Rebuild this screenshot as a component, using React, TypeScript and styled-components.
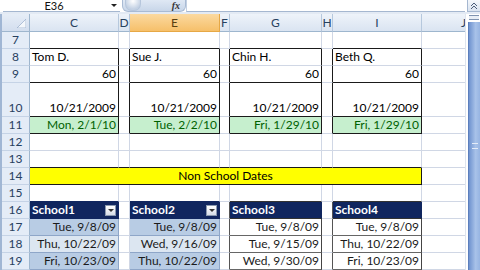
import React from 'react';
import styled, { createGlobalStyle } from 'styled-components';

const GlobalStyle = createGlobalStyle`
  html, body {
    margin: 0;
    padding: 0;
    overflow: hidden;
    background: #fff;
  }
  body {
    font-family: Lato, "Liberation Sans", sans-serif;
  }
`;

const GRID = '#d0d7e5';
const EDGE = '#1a1a1a';

const Screen = styled.div`
  width: 480px;
  height: 270px;
  display: flex;
  flex-direction: column;
  overflow: hidden;
  background: #fff;
`;

const FormulaBar = styled.div`
  height: 14px;
  display: flex;
  box-sizing: border-box;
  border-bottom: 2px solid #e3eaf4;
  background: #fff;
`;

const NameBox = styled.div`
  width: 117px;
  margin-left: 3px;
  display: flex;
  align-items: center;
  box-sizing: border-box;
  border-bottom: 1px solid #a5b7d0;
  font-size: 11px;
  line-height: 11px;
  color: #111;
`;

const NameText = styled.span`
  flex: 1;
  text-align: center;
  padding-right: 6px;
`;

const DropArrow = styled.span`
  width: 0;
  height: 0;
  margin: 0 3px 0 0;
  border-left: 3px solid transparent;
  border-right: 3px solid transparent;
  border-top: 3px solid #222;
`;

const FxGroup = styled.div`
  width: 64px;
  margin-left: 2px;
  display: flex;
  align-items: center;
  justify-content: space-between;
  box-sizing: border-box;
  border-radius: 0 0 6px 6px;
  background: linear-gradient(#dfe8f4, #c8d6e9);
  border: 1px solid #a9bbd4;
  border-top: none;
`;

const Grip = styled.span`
  width: 14px;
  height: 10px;
  margin-left: 2px;
  border-radius: 0 0 7px 7px;
  background: radial-gradient(circle at 50% 10%, #ffffff, #c3d1e4 70%);
  border: 1px solid #b6c6dc;
  border-top: none;
`;

const FxLabel = styled.span`
  font-family: "Liberation Serif", serif;
  font-style: italic;
  font-weight: bold;
  font-size: 10px;
  line-height: 10px;
  color: #333;
  margin-right: 5px;
`;

const FormulaInput = styled.div`
  flex: 1;
  box-sizing: border-box;
  border-bottom: 1px solid #a5b7d0;
  border-left: 1px solid #c3d0e2;
`;

const RibbonToggle = styled.div`
  width: 12px;
  margin-left: 2px;
  display: flex;
  align-items: center;
  justify-content: center;
  background: linear-gradient(#f4f7fb, #d9e3f0);
  border-left: 1px solid #a5b7d0;
  border-bottom: 1px solid #a5b7d0;
`;

const Body = styled.div`
  flex: 1;
  display: flex;
  border-left: 2px solid #a0b6d4;
  min-height: 0;
`;

const Sheet = styled.div`
  flex: 1;
  min-width: 0;
  overflow: hidden;
  display: grid;
  grid-template-columns: 28px 89px 11px 90px 10px 92px 11px 89px 84px;
  grid-template-rows: 18px 17px 17px 17px 34px repeat(9, 17px);
  font-size: 12px;
  line-height: 14px;
  color: #000;
  border-right: 1px solid #dfe5ee;
`;

const Corner = styled.div`
  box-sizing: border-box;
  background: linear-gradient(#e6edf7, #d3deee);
  border-right: 1px solid #9eb6ce;
  border-bottom: 1px solid #9eb6ce;
  display: flex;
  align-items: flex-end;
  justify-content: flex-end;
  padding: 0 3px 3px 0;
`;

const ColHead = styled.div<{ $selected?: boolean }>`
  box-sizing: border-box;
  display: flex;
  align-items: center;
  justify-content: center;
  overflow: hidden;
  color: ${p => (p.$selected ? '#5a3e10' : '#27415f')};
  background: ${p =>
    p.$selected
      ? 'linear-gradient(#fbd9a0, #f6c06a)'
      : 'linear-gradient(#eef3fa, #dae4f1)'};
  border-right: 1px solid ${p => (p.$selected ? '#e6a845' : '#b6c8dd')};
  border-bottom: 1px solid ${p => (p.$selected ? '#e6a845' : '#9eb6ce')};
`;

const RowHead = styled.div`
  box-sizing: border-box;
  display: flex;
  align-items: flex-end;
  justify-content: center;
  padding-bottom: 1px;
  color: #27415f;
  background: #e4ecf7;
  border-right: 1px solid #9eb6ce;
  border-bottom: 1px solid #c5d3e6;
`;

const Cell = styled.div<{
  $fill?: string;
  $ink?: string;
  $align?: 'left' | 'right' | 'center';
  $right?: string;
  $bottom?: string;
  $bold?: boolean;
  $span?: number;
}>`
  grid-column: span ${p => p.$span ?? 1};
  box-sizing: border-box;
  display: flex;
  align-items: flex-end;
  justify-content: ${p =>
    p.$align === 'right' ? 'flex-end' : p.$align === 'center' ? 'center' : 'space-between'};
  gap: 2px;
  padding: 0 2px 1px 2px;
  overflow: hidden;
  white-space: nowrap;
  background: ${p => p.$fill ?? '#fff'};
  color: ${p => p.$ink ?? '#000'};
  font-weight: ${p => (p.$bold ? 700 : 400)};
  border-right: 1px solid ${p => p.$right ?? GRID};
  border-bottom: 1px solid ${p => p.$bottom ?? GRID};
`;

const FilterButton = styled.span`
  width: 11px;
  height: 11px;
  margin-bottom: 1px;
  box-sizing: border-box;
  display: flex;
  align-items: center;
  justify-content: center;
  background: linear-gradient(#ffffff, #d6dde8);
  border: 1px solid #8a99b0;
`;

const FilterArrow = styled.span`
  width: 0;
  height: 0;
  border-left: 3px solid transparent;
  border-right: 3px solid transparent;
  border-top: 3px solid #333;
`;

const ScrollTrack = styled.div`
  width: 12px;
  margin-left: 2px;
  display: flex;
  flex-direction: column;
`;

const SplitBox = styled.div`
  height: 5px;
  box-sizing: border-box;
  border-top: 1px solid #7f93b0;
  border-bottom: 1px solid #7f93b0;
  background: #e8eef6;
  margin: 1px 1px 2px 1px;
`;

const ScrollThumb = styled.div`
  flex: 1;
  background: linear-gradient(90deg, #6f93cf, #a8c2e9 60%, #96b4e2);
  border-left: 1px solid #5c7fbd;
  display: flex;
  align-items: center;
  justify-content: center;
`;

const ThumbGrip = styled.span`
  width: 6px;
  height: 4px;
  border-top: 1px solid #e4ecf8;
  border-bottom: 1px solid #e4ecf8;
`;

const COLUMNS = ['C', 'D', 'E', 'F', 'G', 'H', 'I', 'J'];
const ROWS = [7, 8, 9, 10, 11, 12, 13, 14, 15, 16, 17, 18, 19];

const people = [
  { name: 'Tom D.', due: 'Mon, 2/1/10' },
  { name: 'Sue J.', due: 'Tue, 2/2/10' },
  { name: 'Chin H.', due: 'Fri, 1/29/10' },
  { name: 'Beth Q.', due: 'Fri, 1/29/10' },
];

const schools = [
  { name: 'School1', styled: true, dates: ['Tue, 9/8/09', 'Thu, 10/22/09', 'Fri, 10/23/09'] },
  { name: 'School2', styled: true, dates: ['Tue, 9/8/09', 'Wed, 9/16/09', 'Thu, 10/22/09'] },
  { name: 'School3', styled: false, dates: ['Tue, 9/8/09', 'Tue, 9/15/09', 'Wed, 9/30/09'] },
  { name: 'School4', styled: false, dates: ['Tue, 9/8/09', 'Thu, 10/22/09', 'Fri, 10/23/09'] },
];

const NAVY = '#10265f';

// columns C, E, G, I hold the four blocks; D, F, H are spacers
const blockOf = (col: number) => (col % 2 === 0 && col < 7 ? col / 2 : -1);

function renderRow(row: number) {
  if (row === 14) {
    return [
      <Cell key="band" $span={7} $align="center" $fill="#ffff00" $right={EDGE} $bottom={EDGE}>
        Non School Dates
      </Cell>,
      <Cell key="j" />,
    ];
  }

  return COLUMNS.map((_, col) => {
    const b = blockOf(col);
    const key = `${row}-${col}`;
    const nextIsBlock = blockOf(col + 1) >= 0;

    if (b < 0) {
      // spacer columns: carry the left edge of the block to the right
      const edgeRight = nextIsBlock && row >= 8 && row <= 11 ? EDGE : undefined;
      const tableLeft = nextIsBlock && row >= 16 ? (col === 5 || col === 3 ? '#555' : undefined) : undefined;
      return (
        <Cell
          key={key}
          $right={edgeRight ?? tableLeft}
          $bottom={row === 13 && col < 7 ? EDGE : undefined}
        />
      );
    }

    const p = people[b];
    const s = schools[b];

    switch (row) {
      case 7:
        return <Cell key={key} $bottom={EDGE} />;
      case 8:
        return (
          <Cell key={key} $right={EDGE}>
            {p.name}
          </Cell>
        );
      case 9:
        return (
          <Cell key={key} $align="right" $right={EDGE} $bottom={EDGE}>
            60
          </Cell>
        );
      case 10:
        return (
          <Cell key={key} $align="right" $right={EDGE} $bottom={EDGE}>
            10/21/2009
          </Cell>
        );
      case 11:
        return (
          <Cell key={key} $align="right" $fill="#c6efce" $ink="#006100" $right={EDGE} $bottom={EDGE}>
            {p.due}
          </Cell>
        );
      case 13:
        return <Cell key={key} $bottom={EDGE} />;
      case 15:
        return <Cell key={key} $bottom={s.styled ? NAVY : '#333'} />;
      case 16:
        return (
          <Cell key={key} $fill={NAVY} $ink="#fff" $bold $right={NAVY} $bottom={s.styled ? NAVY : '#333'}>
            {s.name}
            {s.styled && (
              <FilterButton>
                <FilterArrow />
              </FilterButton>
            )}
          </Cell>
        );
      case 17:
      case 18:
      case 19: {
        const i = row - 17;
        const fill = s.styled ? (i % 2 === 0 ? '#b8cce4' : '#dce6f1') : '#fff';
        return (
          <Cell
            key={key}
            $align="right"
            $fill={fill}
            $ink="#1b1b1b"
            $right={s.styled ? '#8ea6c8' : '#444'}
            $bottom={s.styled ? '#8ea6c8' : '#666'}
          >
            {s.dates[i]}
          </Cell>
        );
      }
      default:
        return <Cell key={key} />;
    }
  });
}

const App = () => (
  <Screen>
    <GlobalStyle />
    <FormulaBar>
      <NameBox>
        <NameText>E36</NameText>
        <DropArrow />
      </NameBox>
      <FxGroup>
        <Grip />
        <FxLabel>fx</FxLabel>
      </FxGroup>
      <FormulaInput />
      <RibbonToggle>
        <svg width="8" height="8" viewBox="0 0 8 8">
          <path d="M1 4 L4 1 L7 4 M1 7 L4 4 L7 7" fill="none" stroke="#4a5d7a" strokeWidth="1" />
        </svg>
      </RibbonToggle>
    </FormulaBar>
    <Body>
      <Sheet>
        <Corner>
          <svg width="9" height="9" viewBox="0 0 9 9">
            <path d="M9 0 L9 9 L0 9 Z" fill="#f4f7fb" stroke="#9fb3cf" strokeWidth="0.8" />
          </svg>
        </Corner>
        {COLUMNS.map(c => (
          <ColHead key={c} $selected={c === 'E'}>
            {c}
          </ColHead>
        ))}
        {ROWS.map(r => (
          <React.Fragment key={r}>
            <RowHead>{r}</RowHead>
            {renderRow(r)}
          </React.Fragment>
        ))}
      </Sheet>
      <ScrollTrack>
        <SplitBox />
        <ScrollThumb>
          <ThumbGrip />
        </ScrollThumb>
      </ScrollTrack>
    </Body>
  </Screen>
);

export default App;
